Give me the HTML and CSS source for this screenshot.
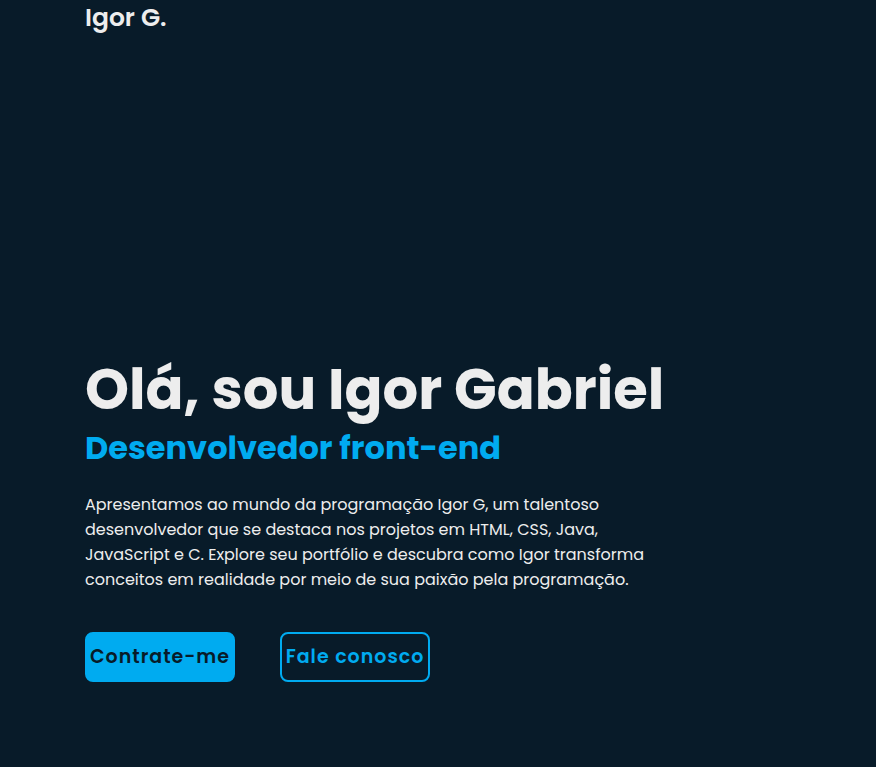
FILE: index.html
```html
<!DOCTYPE html>
<html lang="pt-BR">
<head>
<meta charset="utf-8">
<meta name="viewport" content="width=device-width, initial-scale=1">
<title>Igor G.</title>
<link rel="stylesheet" href="styles.css">
</head>
<body>
<header class="header"><a class="logo" href="#">Igor G.</a></header>
<main class="home">
<div class="home-content">
<h1>Olá, sou Igor Gabriel</h1>
<h2>Desenvolvedor front-end</h2>
<p>Apresentamos ao mundo da programação Igor G, um talentoso desenvolvedor que se destaca nos projetos em HTML, CSS, Java, JavaScript e C. Explore seu portfólio e descubra como Igor transforma conceitos em realidade por meio de sua paixão pela programação.</p>
<div class="actions">
<a class="btn btn-primary" href="#">Contrate-me</a>
<a class="btn btn-outline" href="#">Fale conosco</a>
</div>
</div>
</main>
</body>
</html>
```
FILE: styles.css
```css
* { box-sizing: border-box; margin: 0; padding: 0; }
body {
  display: flex;
  flex-direction: column;
  min-height: 100vh;
  background: #081b29;
  color: #ededed;
  font-family: Poppins, Inter, "Open Sans", sans-serif;
}
.header { padding: 0 85px; }
.logo { display: block; color: #ededed; font-size: 25px; line-height: 36px; font-weight: 600; text-decoration: none; }
.home { display: flex; flex: 1; align-items: flex-end; padding: 0 85px 85px; }
h1 { font-size: 56px; line-height: 68px; font-weight: 700; }
h2 { font-size: 32px; line-height: 48px; font-weight: 700; color: #00abf0; }
p { max-width: 580px; margin: 20px 0 40px; font-size: 16px; line-height: 25px; }
.actions { display: flex; flex-wrap: wrap; gap: 45px; }
.btn {
  display: flex;
  align-items: center;
  justify-content: center;
  width: 150px;
  height: 50px;
  border: 2px solid #00abf0;
  border-radius: 8px;
  font-size: 19px;
  line-height: 28px;
  font-weight: 600;
  letter-spacing: 1px;
  white-space: nowrap;
  text-decoration: none;
}
.btn-primary { background: #00abf0; color: #081b29; }
.btn-outline { color: #00abf0; }
```
